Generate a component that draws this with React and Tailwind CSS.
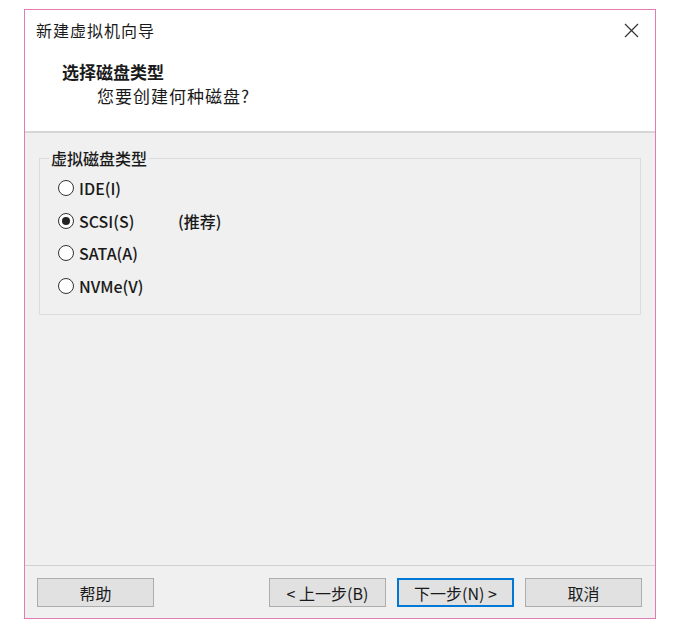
import React, { useState } from "react";

const options = [
  { id: "ide", label: "IDE(I)" },
  { id: "scsi", label: "SCSI(S)", note: "(推荐)" },
  { id: "sata", label: "SATA(A)" },
  { id: "nvme", label: "NVMe(V)" },
];

const Radio = ({ checked }) => (
  <span className="w-[16px] h-[16px] rounded-full border border-[#333] bg-white flex items-center justify-center shrink-0">
    {checked && <span className="w-[8px] h-[8px] rounded-full bg-[#222]" />}
  </span>
);

const Btn = ({ children, primary }) => (
  <button
    className={`w-[117px] h-[29px] bg-[#e1e1e1] text-[16px] text-[#1a1a1a] flex items-center justify-center ${
      primary ? "border-2 border-[#0078d7]" : "border border-[#adadad]"
    }`}
  >
    {children}
  </button>
);

const App = () => {
  const [selected, setSelected] = useState("scsi");

  return (
    <div
      className="w-[692px] h-[629px] bg-white pt-[9px] pl-[24px]"
      style={{ fontFamily: '"Noto Sans CJK SC", "Noto Sans", sans-serif' }}
    >
      <div className="w-[632px] h-[610px] border border-[#e07cb8] flex flex-col text-[#1a1a1a]">
        {/* header */}
        <div className="h-[121px] bg-white flex flex-col">
          <div className="h-[40px] pl-[11px] pr-[16px] flex items-center justify-between">
            <span className="text-[16px] tracking-[1px]">新建虚拟机向导</span>
            <svg width="15" height="15" viewBox="0 0 15 15">
              <path d="M1 1 L14 14 M14 1 L1 14" stroke="#333" strokeWidth="1.2" />
            </svg>
          </div>
          <div className="pl-[37px] mt-[11px] text-[17px] leading-[22px] font-bold">选择磁盘类型</div>
          <div className="pl-[72px] mt-[2px] text-[17px] leading-[22px] tracking-[1px]">您要创建何种磁盘?</div>
        </div>
        <div className="h-[2px] bg-[#d6d6d6]" />

        {/* body */}
        <div className="flex-1 bg-[#f0f0f0] px-[14px] pt-[14px]">
          <fieldset className="border border-[#dcdcdc] pb-[12px]">
            <legend className="ml-[9px] px-[2px] text-[16px] leading-[22px] font-medium">虚拟磁盘类型</legend>
            <div className="pl-[18px] pt-[3px]">
              {options.map(o => (
                <div
                  key={o.id}
                  onClick={() => setSelected(o.id)}
                  className="h-[32.5px] flex items-center cursor-default"
                >
                  <Radio checked={selected === o.id} />
                  <span className="ml-[5px] w-[99px] text-[16px] font-medium">{o.label}</span>
                  {o.note && <span className="text-[16px] font-medium">{o.note}</span>}
                </div>
              ))}
            </div>
          </fieldset>
        </div>

        {/* footer */}
        <div className="h-[53px] bg-[#f0f0f0] border-t border-[#d0d0d0] flex items-start pt-[12px] pl-[12px] pr-[13px]">
          <Btn>帮助</Btn>
          <div className="ml-auto flex gap-[11px]">
            <Btn>&lt; 上一步(B)</Btn>
            <Btn primary>下一步(N) &gt;</Btn>
            <Btn>取消</Btn>
          </div>
        </div>
      </div>
    </div>
  );
};

export default App;
